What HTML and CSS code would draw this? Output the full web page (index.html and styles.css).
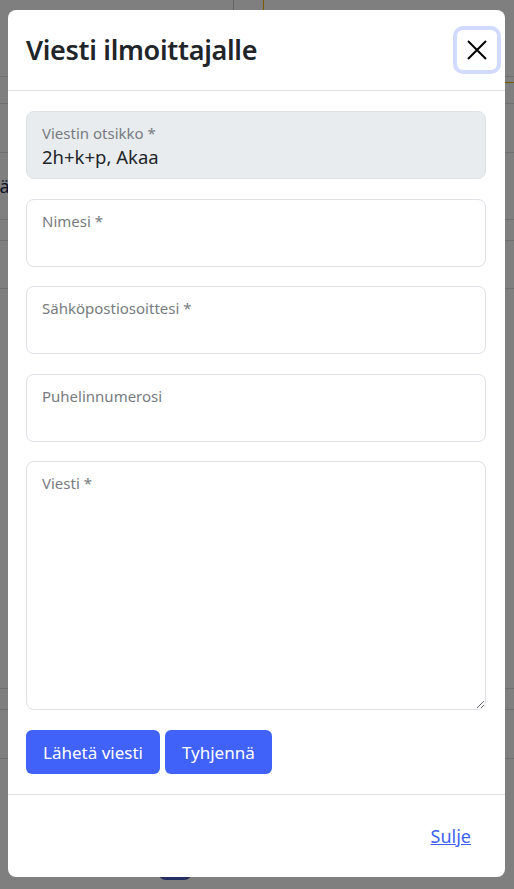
FILE: index.html
```html
<!DOCTYPE html>
<html lang="fi">
<head>
    <meta charset="UTF-8">
    <meta name="viewport" content="width=device-width, initial-scale=1.0">
    <title>Viesti ilmoittajalle</title>
    <link rel="stylesheet" href="styles.css">
</head>
<body>
    <div class="page">
        <div class="page-head">
            <div class="col-a"></div>
            <div class="col-b"></div>
        </div>
        <div class="page-accent"></div>
        <div class="page-row r21"></div>
        <div class="page-row r49"></div>
        <div class="page-row r67"><span class="cut-text">sä</span></div>
        <div class="page-row r21"></div>
        <div class="page-row r48"></div>
        <div class="page-row r400"></div>
        <div class="page-row r21"></div>
        <div class="page-row r49"></div>
        <div class="page-foot"><span class="page-btn"></span></div>
    </div>

    <div class="backdrop"></div>

    <div class="modal">
        <div class="modal-header">
            <h3 class="modal-title">Viesti ilmoittajalle</h3>
            <button class="btn-close" aria-label="Sulje">
                <svg width="20" height="20" viewBox="0 0 20 20">
                    <path d="M1 1 L19 19 M19 1 L1 19" stroke="#000" stroke-width="2" fill="none"/>
                </svg>
            </button>
        </div>
        <form class="modal-body">
            <div class="field disabled">
                <label for="subject">Viestin otsikko *</label>
                <input type="text" id="subject" value="2h+k+p, Akaa" disabled>
            </div>
            <div class="field">
                <label for="name">Nimesi *</label>
                <input type="text" id="name">
            </div>
            <div class="field">
                <label for="email">Sähköpostiosoittesi *</label>
                <input type="email" id="email">
            </div>
            <div class="field">
                <label for="phone">Puhelinnumerosi</label>
                <input type="tel" id="phone">
            </div>
            <div class="field area">
                <label for="message">Viesti *</label>
                <textarea id="message"></textarea>
            </div>
            <div class="actions">
                <button type="button" class="btn">Lähetä viesti</button>
                <button type="reset" class="btn">Tyhjennä</button>
            </div>
        </form>
        <div class="modal-footer">
            <a href="#" class="link">Sulje</a>
        </div>
    </div>
</body>
</html>
```

FILE: styles.css
```css
* {
    box-sizing: border-box;
}
body {
    margin: 0;
    height: 889px;
    overflow: hidden;
    font-family: "Noto Sans", "Open Sans", sans-serif;
    color: #212529;
}
.page {
    background-color: #fff;
    height: 889px;
}
.page-head {
    display: flex;
    height: 77px;
    border-bottom: 1px solid #dcdcdc;
}
.page-head .col-a {
    width: 234px;
    border-right: 1px solid #c8c8c8;
}
.page-head .col-b {
    width: 30px;
    border-right: 1px solid #f0b400;
}
.page-accent {
    height: 6px;
    margin-left: 470px;
    border-bottom: 1px solid #f0b400;
}
.page-row {
    border-bottom: 1px solid #dcdcdc;
    display: flex;
    align-items: center;
}
.r21 { height: 21px; }
.r48 { height: 48px; }
.r49 { height: 49px; }
.r67 { height: 67px; }
.r400 { height: 400px; }
.cut-text {
    margin-left: -9px;
    font-size: 18px;
    color: #1b2a55;
}
.page-foot {
    padding: 91px 0 0 158px;
}
.page-btn {
    display: block;
    width: 34px;
    height: 30px;
    border-radius: 8px;
    background-color: #4a5cc0;
}
.backdrop {
    position: fixed;
    inset: 0;
    background-color: rgba(0, 0, 0, 0.5);
}
.modal {
    position: fixed;
    top: 10px;
    left: 8px;
    width: 497px;
    background-color: #fff;
    border-radius: 8px;
}
.modal-header {
    display: flex;
    align-items: center;
    justify-content: space-between;
    height: 81px;
    padding: 0 8px 0 18px;
    border-bottom: 1px solid #dee2e6;
}
.modal-title {
    margin: 0;
    font-size: 27px;
    font-weight: 600;
    letter-spacing: -0.3px;
    line-height: 1.2;
}
.btn-close {
    width: 40px;
    height: 40px;
    padding: 0;
    display: flex;
    align-items: center;
    justify-content: center;
    background: none;
    border: none;
    border-radius: 6px;
    box-shadow: 0 0 0 4px #d1daff;
    cursor: pointer;
}
.modal-body {
    padding: 20px 19px 20px 18px;
    margin: 0;
}
.field {
    display: flex;
    flex-direction: column;
    height: 68px;
    margin-bottom: 19.5px;
    padding: 11px 15px 0;
    border: 1px solid #dee2e6;
    border-radius: 8px;
}
.field label {
    font-size: 15px;
    line-height: 20px;
    color: #777b80;
}
.field input,
.field textarea {
    border: none;
    outline: none;
    padding: 0;
    background: transparent;
    font-family: inherit;
    font-size: 18.5px;
    color: #212529;
}
.field input {
    height: 26px;
}
.field.disabled {
    background-color: #e9ecef;
}
.field.area {
    height: 249px;
    padding: 11px 0 0 15px;
    margin-bottom: 20px;
}
.field.area textarea {
    flex: 1;
    resize: vertical;
    padding-right: 15px;
    border-radius: 0 0 7px 0;
}
.actions {
    display: flex;
    gap: 5px;
}
.btn {
    height: 44px;
    padding: 0 17px;
    font-family: inherit;
    font-size: 17px;
    color: #fff;
    background-color: #4062f9;
    border: none;
    border-radius: 6px;
    cursor: pointer;
}
.modal-footer {
    display: flex;
    align-items: center;
    justify-content: flex-end;
    height: 83px;
    padding: 0 34px 0 18px;
    border-top: 1px solid #dee2e6;
}
.link {
    font-size: 18px;
    color: #4062f9;
}
```
